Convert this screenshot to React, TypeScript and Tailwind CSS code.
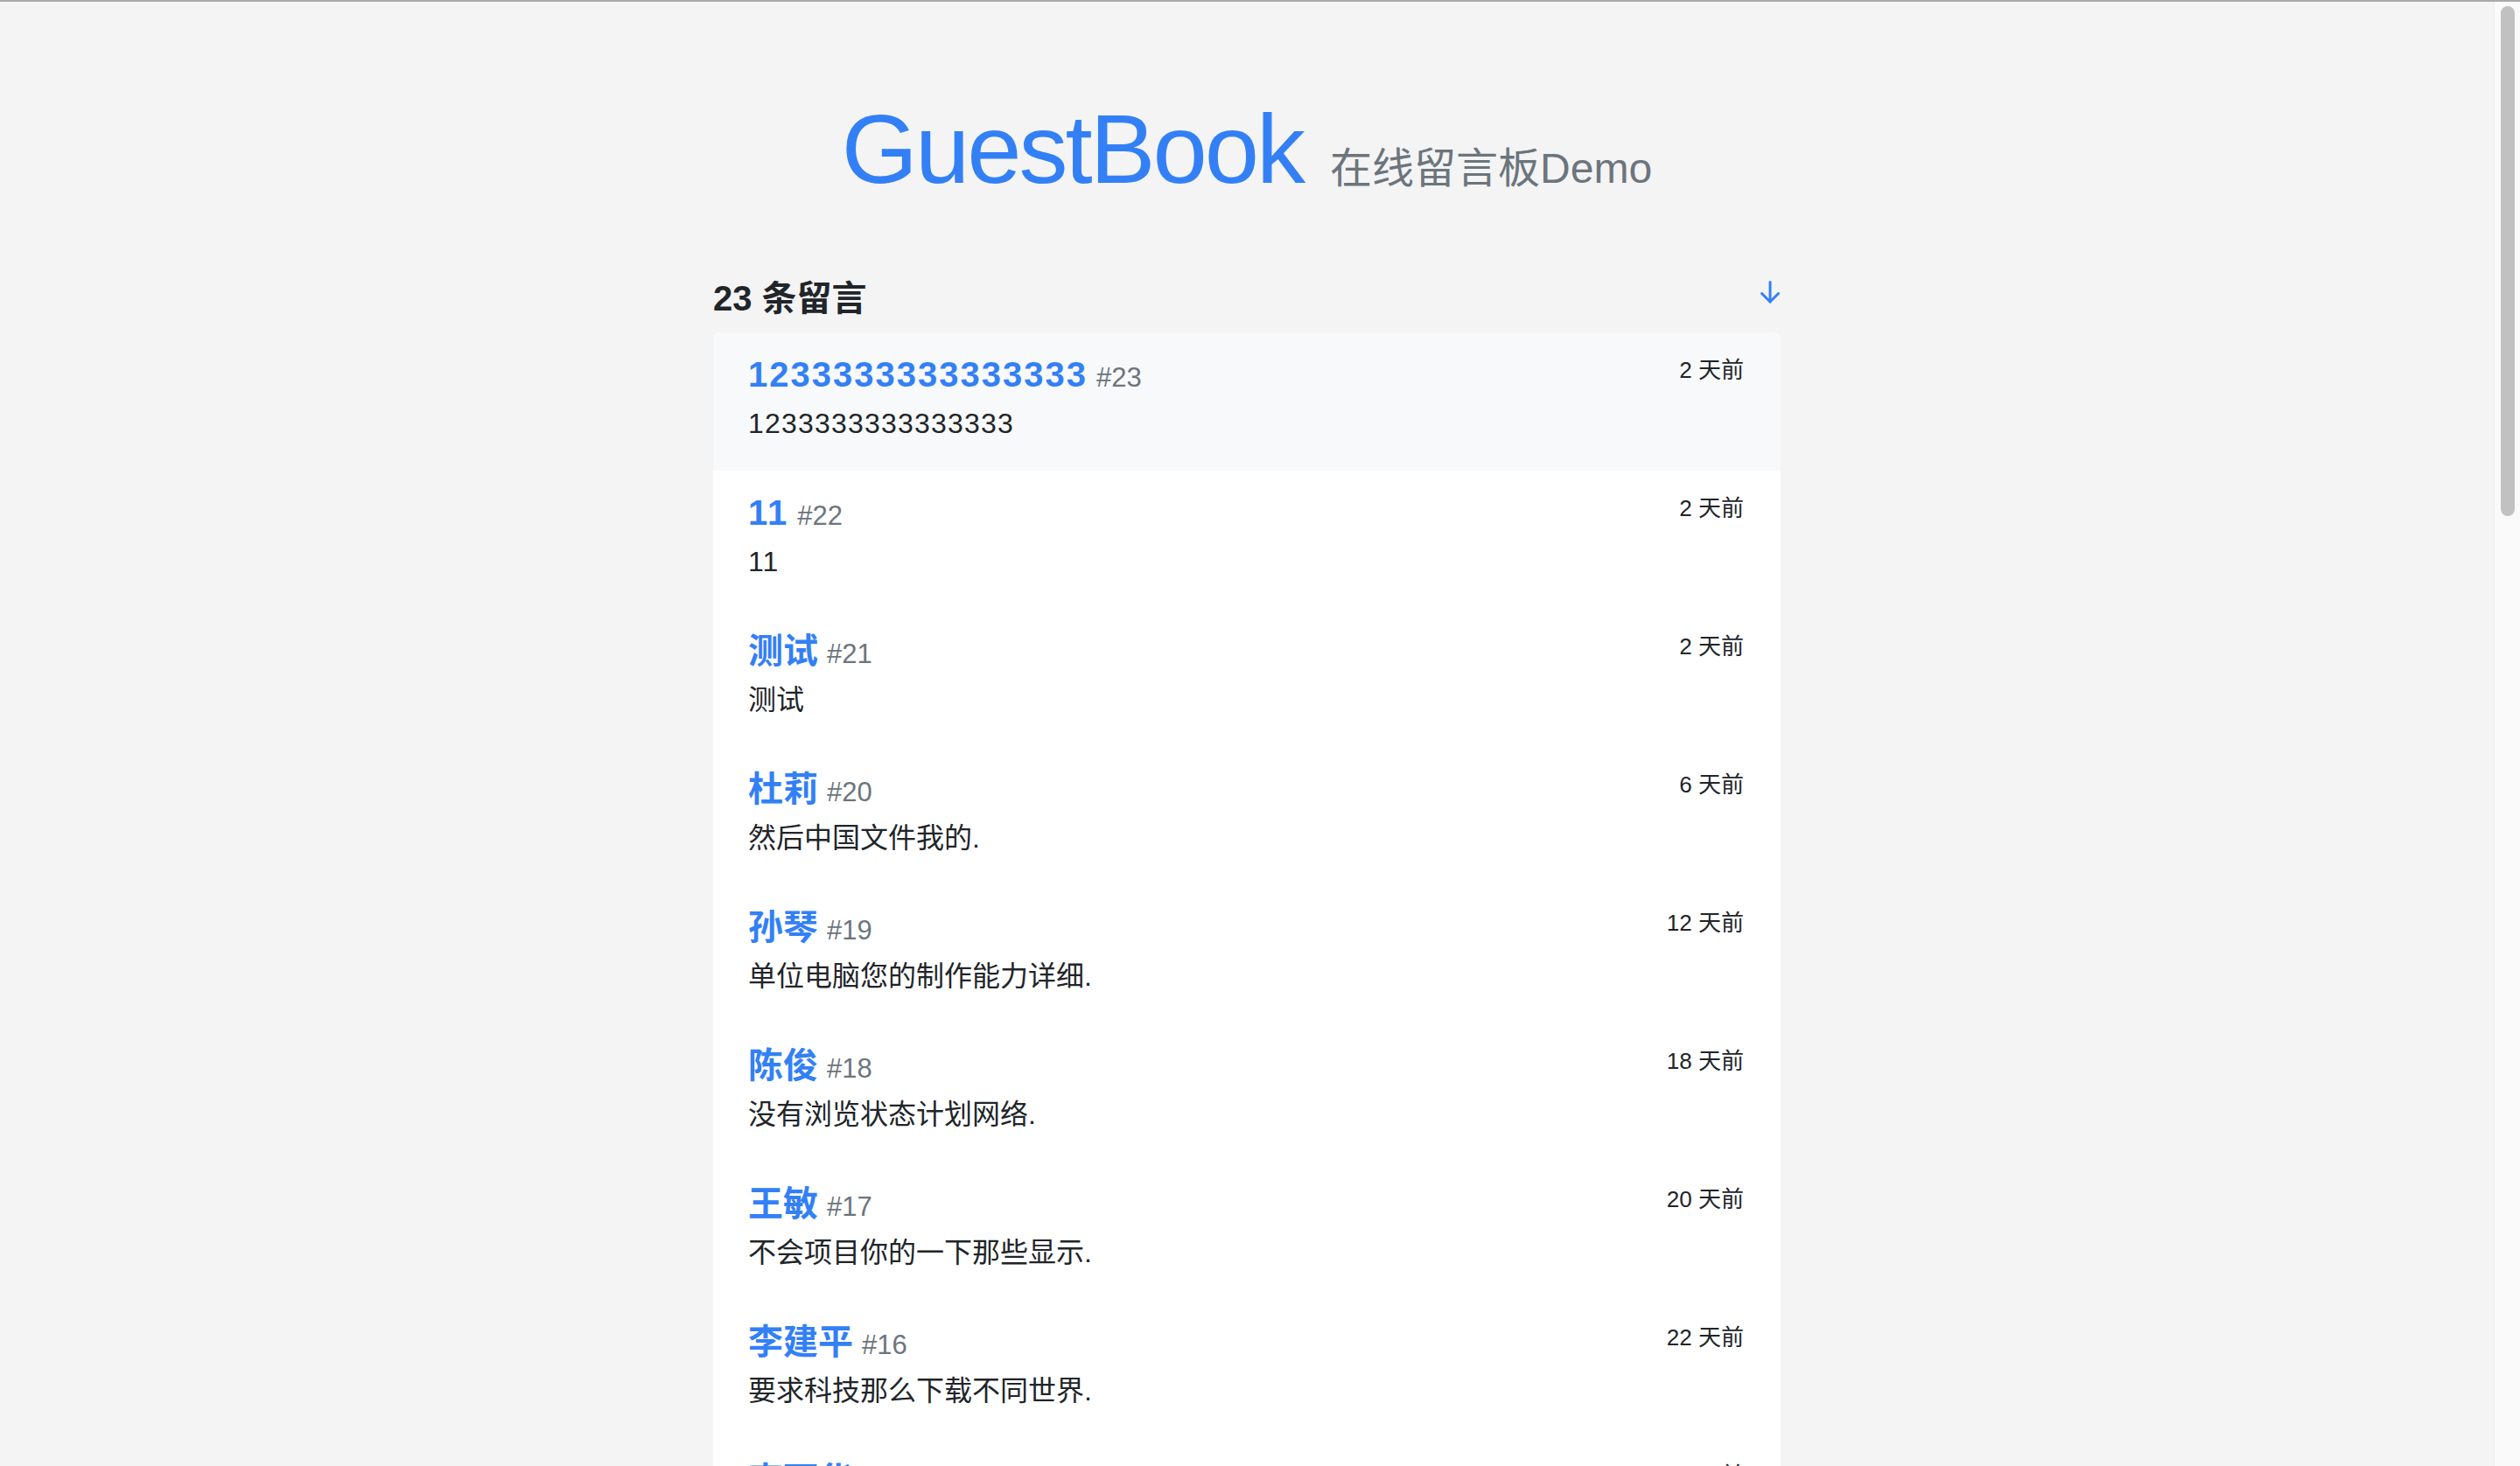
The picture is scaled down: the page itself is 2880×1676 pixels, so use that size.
import React from "react";

type Msg = { name: string; id: number; body: string; time: string };

const messages: Msg[] = [
  { name: "1233333333333333", id: 23, body: "1233333333333333", time: "2 天前" },
  { name: "11", id: 22, body: "11", time: "2 天前" },
  { name: "测试", id: 21, body: "测试", time: "2 天前" },
  { name: "杜莉", id: 20, body: "然后中国文件我的.", time: "6 天前" },
  { name: "孙琴", id: 19, body: "单位电脑您的制作能力详细.", time: "12 天前" },
  { name: "陈俊", id: 18, body: "没有浏览状态计划网络.", time: "18 天前" },
  { name: "王敏", id: 17, body: "不会项目你的一下那些显示.", time: "20 天前" },
  { name: "李建平", id: 16, body: "要求科技那么下载不同世界.", time: "22 天前" },
  { name: "李丽华", id: 15, body: "能够一般喜欢介绍主题.", time: "24 天前" },
  { name: "张伟", id: 14, body: "工作时间因为直接.", time: "25 天前" },
];

const isDigits = (s: string) => /^[0-9]+$/.test(s);

function ArrowDownIcon() {
  return (
    <svg width="24" height="26" viewBox="0 0 24 26" fill="none" stroke="#3380f6" strokeWidth="3" strokeLinecap="round" strokeLinejoin="round">
      <path d="M12 1.5V24" />
      <path d="M2.5 14.5L12 24L21.5 14.5" />
    </svg>
  );
}

export default function App() {
  return (
    <div
      className="h-[1676px] flex flex-col overflow-hidden bg-[#f4f4f4] border-t-2 border-[#a9a9a9] text-[#212529]"
      style={{ fontFamily: '"Liberation Sans", "Noto Sans CJK SC", sans-serif' }}
    >
      <div className="flex flex-1 min-h-0">
        <main className="flex-1 min-w-0 overflow-hidden pt-[102px]">
          <h1 className="text-center text-[112px] leading-[134px] h-[134px] font-normal text-[#3380f6] mb-[79px]">
            <span className="tracking-[-3px]">GuestBook</span>{" "}
            <small className="text-[48px] leading-none text-[#6c757d]">在线留言板Demo</small>
          </h1>
          <div className="w-[1220px] mx-auto">
            <div className="flex justify-between items-start mb-[15px]">
              <h5 className="text-[40px] leading-[48px] font-bold">23 条留言</h5>
              <div className="mt-[4px]">
                <ArrowDownIcon />
              </div>
            </div>
            <div className="rounded-[8px] overflow-hidden bg-white">
              {messages.map((m, i) => (
                <div
                  key={m.id}
                  className={`flex justify-between items-start h-[158px] pt-[24px] pl-[40px] pr-[42px] ${
                    i === 0 ? "bg-[#f8f9fa]" : "bg-white"
                  }`}
                >
                  <div>
                    <div className="h-[48px] text-[40px] leading-[48px] font-semibold text-[#3380f6] mb-[8px]">
                      <span className={isDigits(m.name) ? "tracking-[2px]" : ""}>{m.name}</span>
                      <small className="ml-[10px] text-[31px] leading-none font-normal text-[#6c757d]">#{m.id}</small>
                    </div>
                    <p className={`h-[48px] text-[32px] leading-[48px] ${isDigits(m.body) ? "tracking-[1.2px]" : ""}`}>
                      {m.body}
                    </p>
                  </div>
                  <span className="text-[26px] leading-[39px] whitespace-nowrap">{m.time}</span>
                </div>
              ))}
            </div>
          </div>
        </main>
        <div className="w-[30px] shrink-0 bg-[#fafafa] border-l border-[#ececec] pt-[5px] pl-[7px]">
          <div className="w-[16px] h-[583px] rounded-full bg-[#c1c1c1]" />
        </div>
      </div>
    </div>
  );
}
